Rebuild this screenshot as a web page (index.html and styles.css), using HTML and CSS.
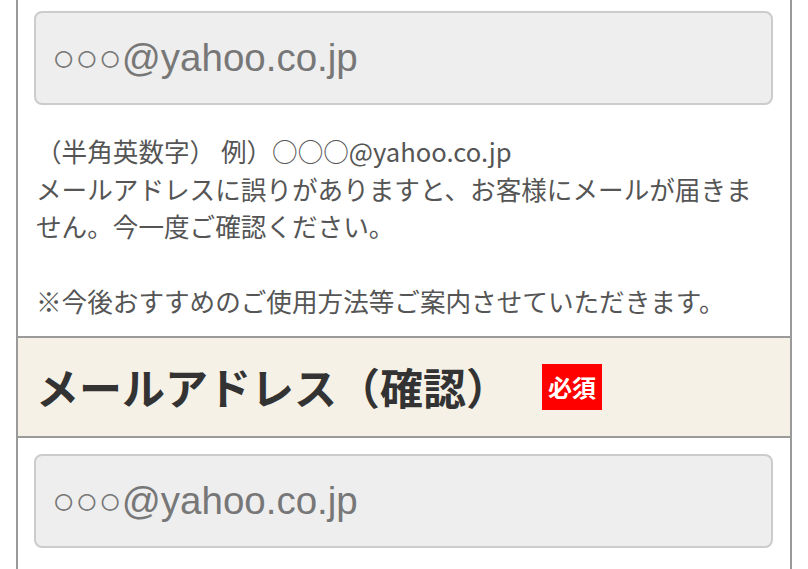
FILE: index.html
```html
<!DOCTYPE html>
<html lang="ja">
<head>
<meta charset="utf-8">
<title>メールアドレス</title>
<link rel="stylesheet" href="styles.css">
</head>
<body>
<div class="form">
  <div class="field field-first">
    <input class="text-input" type="email" placeholder="○○○@yahoo.co.jp">
    <p class="note">（半角英数字） 例）○○○@yahoo.co.jp<br>メールアドレスに誤りがありますと、お客様にメールが届きません。今一度ご確認ください。<br><br>※今後おすすめのご使用方法等ご案内させていただきます。</p>
  </div>
  <div class="label-row">
    <h2 class="label">メールアドレス（確認）</h2>
    <span class="badge">必須</span>
  </div>
  <div class="field">
    <input class="text-input" type="email" placeholder="○○○@yahoo.co.jp">
  </div>
</div>
</body>
</html>
```

FILE: styles.css
```css
html, body {
  margin: 0;
  padding: 0;
  background: #fff;
}

body {
  font-family: "Noto Sans CJK JP", sans-serif;
  overflow: hidden;
}

.form {
  margin: 0 16px;
  border-left: 2px solid #9a9a9a;
  border-right: 2px solid #9a9a9a;
  min-height: 569px;
}

.field {
  padding: 16px 17px 0 16px;
}

.field-first {
  padding-top: 11px;
  padding-bottom: 16px;
}

.text-input {
  display: block;
  box-sizing: border-box;
  width: 100%;
  height: 94px;
  margin: 0;
  padding: 0 16px;
  border: 2px solid #cccccc;
  border-radius: 8px;
  background: #eeeeee;
  font-family: "Liberation Sans", Arial, sans-serif;
  font-size: 38.5px;
  color: #333;
  outline: none;
}

.text-input::placeholder {
  color: #777777;
  opacity: 1;
}

.note {
  margin: 27px 0 0 0;
  padding: 0 2px;
  font-size: 25.6px;
  line-height: 37.5px;
  color: #555555;
}

.label-row {
  display: flex;
  align-items: center;
  height: 98px;
  padding: 0 18px;
  border-top: 2px solid #9a9a9a;
  border-bottom: 2px solid #9a9a9a;
  background: #f5f1e6;
}

.label {
  margin: 0;
  font-size: 43px;
  font-weight: 700;
  line-height: 1;
  color: #333333;
}

.badge {
  margin-left: 33px;
  height: 46px;
  padding: 0 6px;
  background: #ff0000;
  color: #ffffff;
  font-size: 24px;
  font-weight: 700;
  line-height: 46px;
}
```
